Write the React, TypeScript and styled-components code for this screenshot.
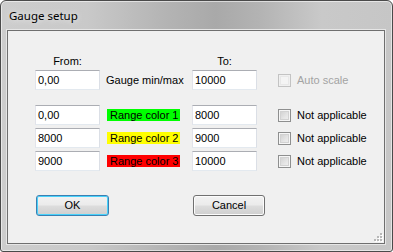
import React from "react";
import styled, { createGlobalStyle, css } from "styled-components";

const Global = createGlobalStyle`
  html, body { margin: 0; padding: 0; background: #ffffff; }
  body { width: 393px; height: 252px; overflow: hidden; }
  * { box-sizing: border-box; }
`;

const Window = styled.div`
  width: 393px;
  height: 252px;
  border: 1px solid #4a4a4a;
  border-radius: 6px 6px 3px 3px;
  background: linear-gradient(90deg, #cdcdcd 0%, #c9c9c9 22%, #b4b4b4 42%, #a9a9a9 55%, #b3b3b3 66%, #c9c9c9 82%, #c6c6c6 100%);
  box-shadow: inset 0 0 0 1px rgba(255, 255, 255, 0.55);
  display: flex;
  flex-direction: column;
  font-family: "Liberation Sans", Arial, sans-serif;
  font-size: 11px;
  color: #000;
`;

const TitleBar = styled.div`
  height: 29px;
  flex: none;
  padding: 8px 0 0 8px;
  font-family: "Noto Sans", "Open Sans", sans-serif;
  font-size: 11.5px;
  line-height: 14px;
  color: #000;
  text-shadow: 0 0 6px rgba(255, 255, 255, 0.9);
`;

const Client = styled.div`
  position: relative;
  flex: 1;
  margin: 0 7px 7px 6px;
  background: #f0f0f0;
  border: 1px solid #6f6f6f;
  box-shadow: 0 0 0 1px #e6e6e6;
  padding: 23px 0 0 27px;
  display: flex;
  flex-direction: column;
`;

const columns = css`
  display: grid;
  grid-template-columns: 65px 80px 65px 1fr;
  column-gap: 6px;
`;

const HeaderRow = styled.div`
  ${columns};
  height: 14px;
  line-height: 14px;
`;

const ColHead = styled.div`
  text-align: center;
`;

const Fields = styled.div<{ $top: number }>`
  ${columns};
  grid-auto-rows: 20px;
  row-gap: 3px;
  margin-top: ${(p) => p.$top}px;
`;

const TextBox = styled.div`
  width: 65px;
  height: 20px;
  background: #fff;
  border: 1px solid #dbdfe6;
  border-top-color: #abadb3;
  border-left-color: #e2e3ea;
  border-right-color: #dbdfe6;
  border-bottom-color: #e3e9ef;
  padding: 0 0 0 2px;
  line-height: 18px;
  white-space: nowrap;
  overflow: hidden;
`;

const Caption = styled.div`
  display: flex;
  align-items: center;
  white-space: nowrap;
`;

const Swatch = styled.span<{ $bg: string }>`
  display: inline-block;
  margin-left: 1px;
  width: 73px;
  height: 12px;
  line-height: 12px;
  padding-left: 3px;
  background: ${(p) => p.$bg};
  white-space: nowrap;
`;

const CheckCell = styled.label<{ $disabled?: boolean }>`
  display: flex;
  align-items: center;
  padding-left: 15px;
  gap: 6px;
  color: ${(p) => (p.$disabled ? "#a3a3a3" : "#000")};
  white-space: nowrap;
`;

const Box = styled.span<{ $disabled?: boolean }>`
  width: 13px;
  height: 13px;
  flex: none;
  border: 1px solid ${(p) => (p.$disabled ? "#c3c3c3" : "#8e8f8f")};
  background: #f4f4f4;
  box-shadow: inset 0 0 0 1px ${(p) => (p.$disabled ? "#f0f0f0" : "#f6f6f6")},
    inset 0 0 0 2px ${(p) => (p.$disabled ? "#e8e8e8" : "#d2d2d2")};
  background-image: ${(p) =>
    p.$disabled ? "none" : "linear-gradient(135deg, #cbcbcb 0%, #e6e6e6 60%, #f2f2f2 100%)"};
  background-origin: content-box;
`;

const ButtonRow = styled.div`
  display: flex;
  margin-top: 24px;
  padding-left: 1px;
  gap: 84px;
`;

const Button = styled.div<{ $default?: boolean; $w: number }>`
  width: ${(p) => p.$w}px;
  height: 21px;
  border-radius: 3px;
  border: 1px solid ${(p) => (p.$default ? "#3c7fb1" : "#707070")};
  background: linear-gradient(180deg, #f2f2f2 0%, #ebebeb 48%, #dddddd 52%, #cfcfcf 100%);
  box-shadow: inset 0 0 0 1px ${(p) => (p.$default ? "#48d2fb" : "#fcfcfc")};
  display: flex;
  align-items: center;
  justify-content: center;
  line-height: 13px;
`;

const Grip = styled.svg`
  position: absolute;
  right: 1px;
  bottom: 1px;
`;

const rows = [
  { from: "0,00", label: "Range color 1", color: "#00ff00", to: "8000" },
  { from: "8000", label: "Range color 2", color: "#ffff00", to: "9000" },
  { from: "9000", label: "Range color 3", color: "#ff0000", to: "10000" },
];

const gripDots: [number, number][] = [
  [6, 0],
  [3, 3],
  [6, 3],
  [0, 6],
  [3, 6],
  [6, 6],
];

export default function App() {
  return (
    <>
      <Global />
      <Window>
        <TitleBar>Gauge setup</TitleBar>
        <Client>
          <HeaderRow>
            <ColHead>From:</ColHead>
            <div />
            <ColHead>To:</ColHead>
            <div />
          </HeaderRow>
          <Fields $top={2}>
            <TextBox>0,00</TextBox>
            <Caption>Gauge min/max</Caption>
            <TextBox>10000</TextBox>
            <CheckCell $disabled>
              <Box $disabled />
              Auto scale
            </CheckCell>
          </Fields>
          <Fields $top={15}>
            {rows.map((r) => (
              <React.Fragment key={r.label}>
                <TextBox>{r.from}</TextBox>
                <Caption>
                  <Swatch $bg={r.color}>{r.label}</Swatch>
                </Caption>
                <TextBox>{r.to}</TextBox>
                <CheckCell>
                  <Box />
                  Not applicable
                </CheckCell>
              </React.Fragment>
            ))}
          </Fields>
          <ButtonRow>
            <Button $default $w={73}>OK</Button>
            <Button $w={72}>Cancel</Button>
          </ButtonRow>
          <Grip width="9" height="9" viewBox="0 0 9 9">
            {gripDots.map(([x, y]) => (
              <g key={`${x}-${y}`}>
                <rect x={x + 1} y={y + 1} width="2" height="2" fill="#ffffff" />
                <rect x={x} y={y} width="2" height="2" fill="#b8b8b8" />
              </g>
            ))}
          </Grip>
        </Client>
      </Window>
    </>
  );
}
